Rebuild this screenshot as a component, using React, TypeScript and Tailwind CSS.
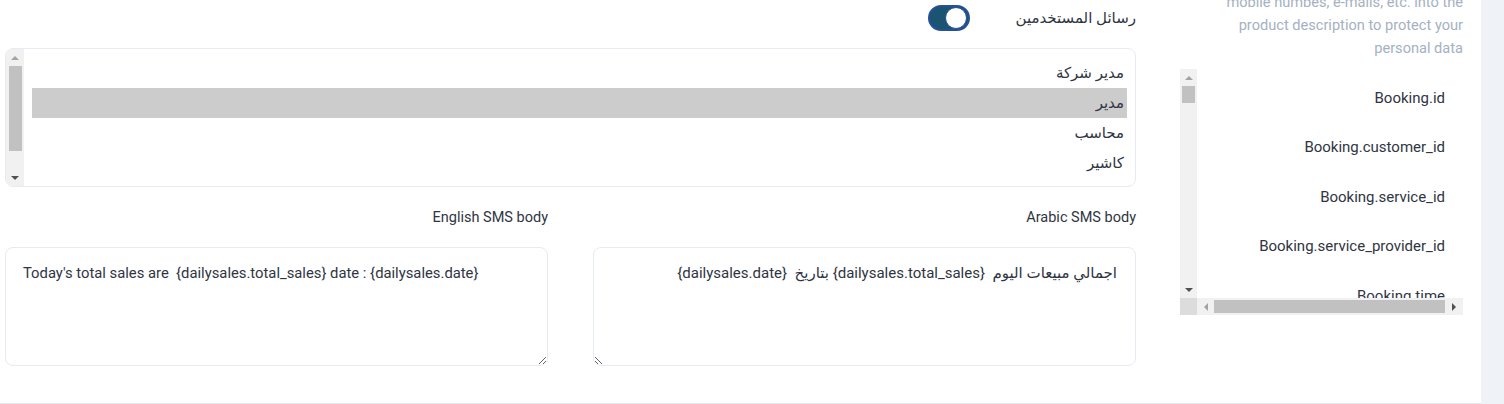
import React from "react";

const font = { fontFamily: "Roboto, 'DejaVu Sans', sans-serif" };

function Arrow({ dir, dark }: { dir: "up" | "down" | "left" | "right"; dark?: boolean }) {
  const pts = {
    up: "0,4 4,0 8,4",
    down: "0,0 8,0 4,4",
    left: "4,0 4,8 0,4",
    right: "0,0 0,8 4,4",
  }[dir];
  const horiz = dir === "left" || dir === "right";
  return (
    <svg width={horiz ? 4 : 8} height={horiz ? 8 : 4} viewBox={horiz ? "0 0 4 8" : "0 0 8 4"}>
      <polygon points={pts} fill={dark ? "#505050" : "#a3a3a3"} />
    </svg>
  );
}

export default function App() {
  const roles = ["مدير شركة", "مدير", "محاسب", "كاشير"];
  const fields = [
    "Booking.id",
    "Booking.customer_id",
    "Booking.service_id",
    "Booking.service_provider_id",
    "Booking.time",
  ];

  return (
    <div className="flex w-[1504px] h-[404px] overflow-hidden bg-white text-[#2f3542]" style={font}>
      {/* Main */}
      <div className="flex w-[1481px] h-[404px] border-b border-[#e7eaee]">
        {/* Left column */}
        <div className="ml-[5px] w-[1131px] flex flex-col">
          {/* Toggle row */}
          <div className="h-[36px] mb-[12px] flex items-center justify-end gap-[46px]" dir="ltr">
            <div className="w-[42px] h-[26px] rounded-full bg-[#1b5470] border-2 border-[#27509a] flex items-center justify-end pr-[1px]">
              <div className="w-[22px] h-[22px] rounded-full bg-white border border-[#27509a]" />
            </div>
            <span className="text-[15px] text-[#2f3542]" dir="rtl">رسائل المستخدمين</span>
          </div>

          {/* Roles listbox */}
          <div className="h-[139px] rounded-lg border border-[#e6ebf1] flex overflow-hidden">
            <div className="w-[18px] h-full bg-[#f1f1f1] flex flex-col items-center">
              <div className="h-[17px] flex items-center justify-center">
                <Arrow dir="up" />
              </div>
              <div className="w-[13px] h-[85px] bg-[#c1c1c1]" />
              <div className="flex-1" />
              <div className="h-[17px] flex items-center justify-center">
                <Arrow dir="down" dark />
              </div>
            </div>
            <div className="flex-1 pt-[9px] px-[8px]" dir="rtl">
              {roles.map((r, i) => (
                <div
                  key={r}
                  className={
                    "h-[30px] flex items-center px-[3px] text-[15px] text-[#2f3542] " +
                    (i === 1 ? "bg-[#cccccc]" : "")
                  }
                >
                  {r}
                </div>
              ))}
            </div>
          </div>

          {/* SMS bodies */}
          <div className="mt-[18px] flex gap-[45px]">
            <div className="w-[543px] flex flex-col">
              <div className="h-[26px] mb-[16px] flex items-center justify-end text-[14.5px]">English SMS body</div>
              <textarea
                readOnly
                dir="ltr"
                defaultValue="Today's total sales are  {dailysales.total_sales} date : {dailysales.date}"
                className="w-[543px] h-[119px] rounded-lg border border-[#e6ebf1] px-[17px] pt-[14px] text-[14.8px] text-[#2f3542] outline-none"
                style={font}
              />
            </div>
            <div className="w-[543px] flex flex-col">
              <div className="h-[26px] mb-[16px] flex items-center justify-end text-[14.5px]">Arabic SMS body</div>
              <textarea
                readOnly
                dir="rtl"
                defaultValue="اجمالي مبيعات اليوم  {dailysales.total_sales} بتاريخ  {dailysales.date}"
                className="w-[543px] h-[119px] rounded-lg border border-[#e6ebf1] px-[18px] pt-[14px] text-[15px] text-[#2f3542] outline-none"
                style={font}
              />
            </div>
          </div>
        </div>

        {/* Right column */}
        <div className="ml-[44px] w-[283px] flex flex-col">
          <p className="-mt-[9px] text-right text-[14.6px] leading-[23px] text-[#a5b1c2]">
            mobile numbes, e-mails, etc. into the
            <br />
            product description to protect your
            <br />
            personal data
          </p>
          <div className="mt-[9px] h-[246px] flex flex-col">
            <div className="flex-1 flex min-h-0">
              <div className="w-[17px] bg-[#f1f1f1] flex flex-col items-center">
                <div className="h-[17px] flex items-center justify-center">
                  <Arrow dir="up" />
                </div>
                <div className="w-[13px] h-[17px] bg-[#c1c1c1]" />
                <div className="flex-1" />
                <div className="h-[17px] flex items-center justify-center">
                  <Arrow dir="down" dark />
                </div>
              </div>
              <div className="flex-1 overflow-hidden pt-[4px] pr-[18px]">
                {fields.map((f) => (
                  <div key={f} className="h-[49.5px] flex items-center justify-end text-[15px] text-[#2f3542]">
                    {f}
                  </div>
                ))}
              </div>
            </div>
            <div className="h-[17px] flex">
              <div className="w-[17px] bg-[#dcdcdc]" />
              <div className="flex-1 bg-[#f1f1f1] flex items-center">
                <div className="w-[17px] flex justify-center">
                  <Arrow dir="left" />
                </div>
                <div className="w-[231px] h-[13px] bg-[#c1c1c1]" />
                <div className="flex-1 flex justify-center">
                  <Arrow dir="right" dark />
                </div>
              </div>
            </div>
          </div>
        </div>
      </div>

      {/* Right strip */}
      <div className="flex-1 bg-[#eff3f8]" />
    </div>
  );
}
